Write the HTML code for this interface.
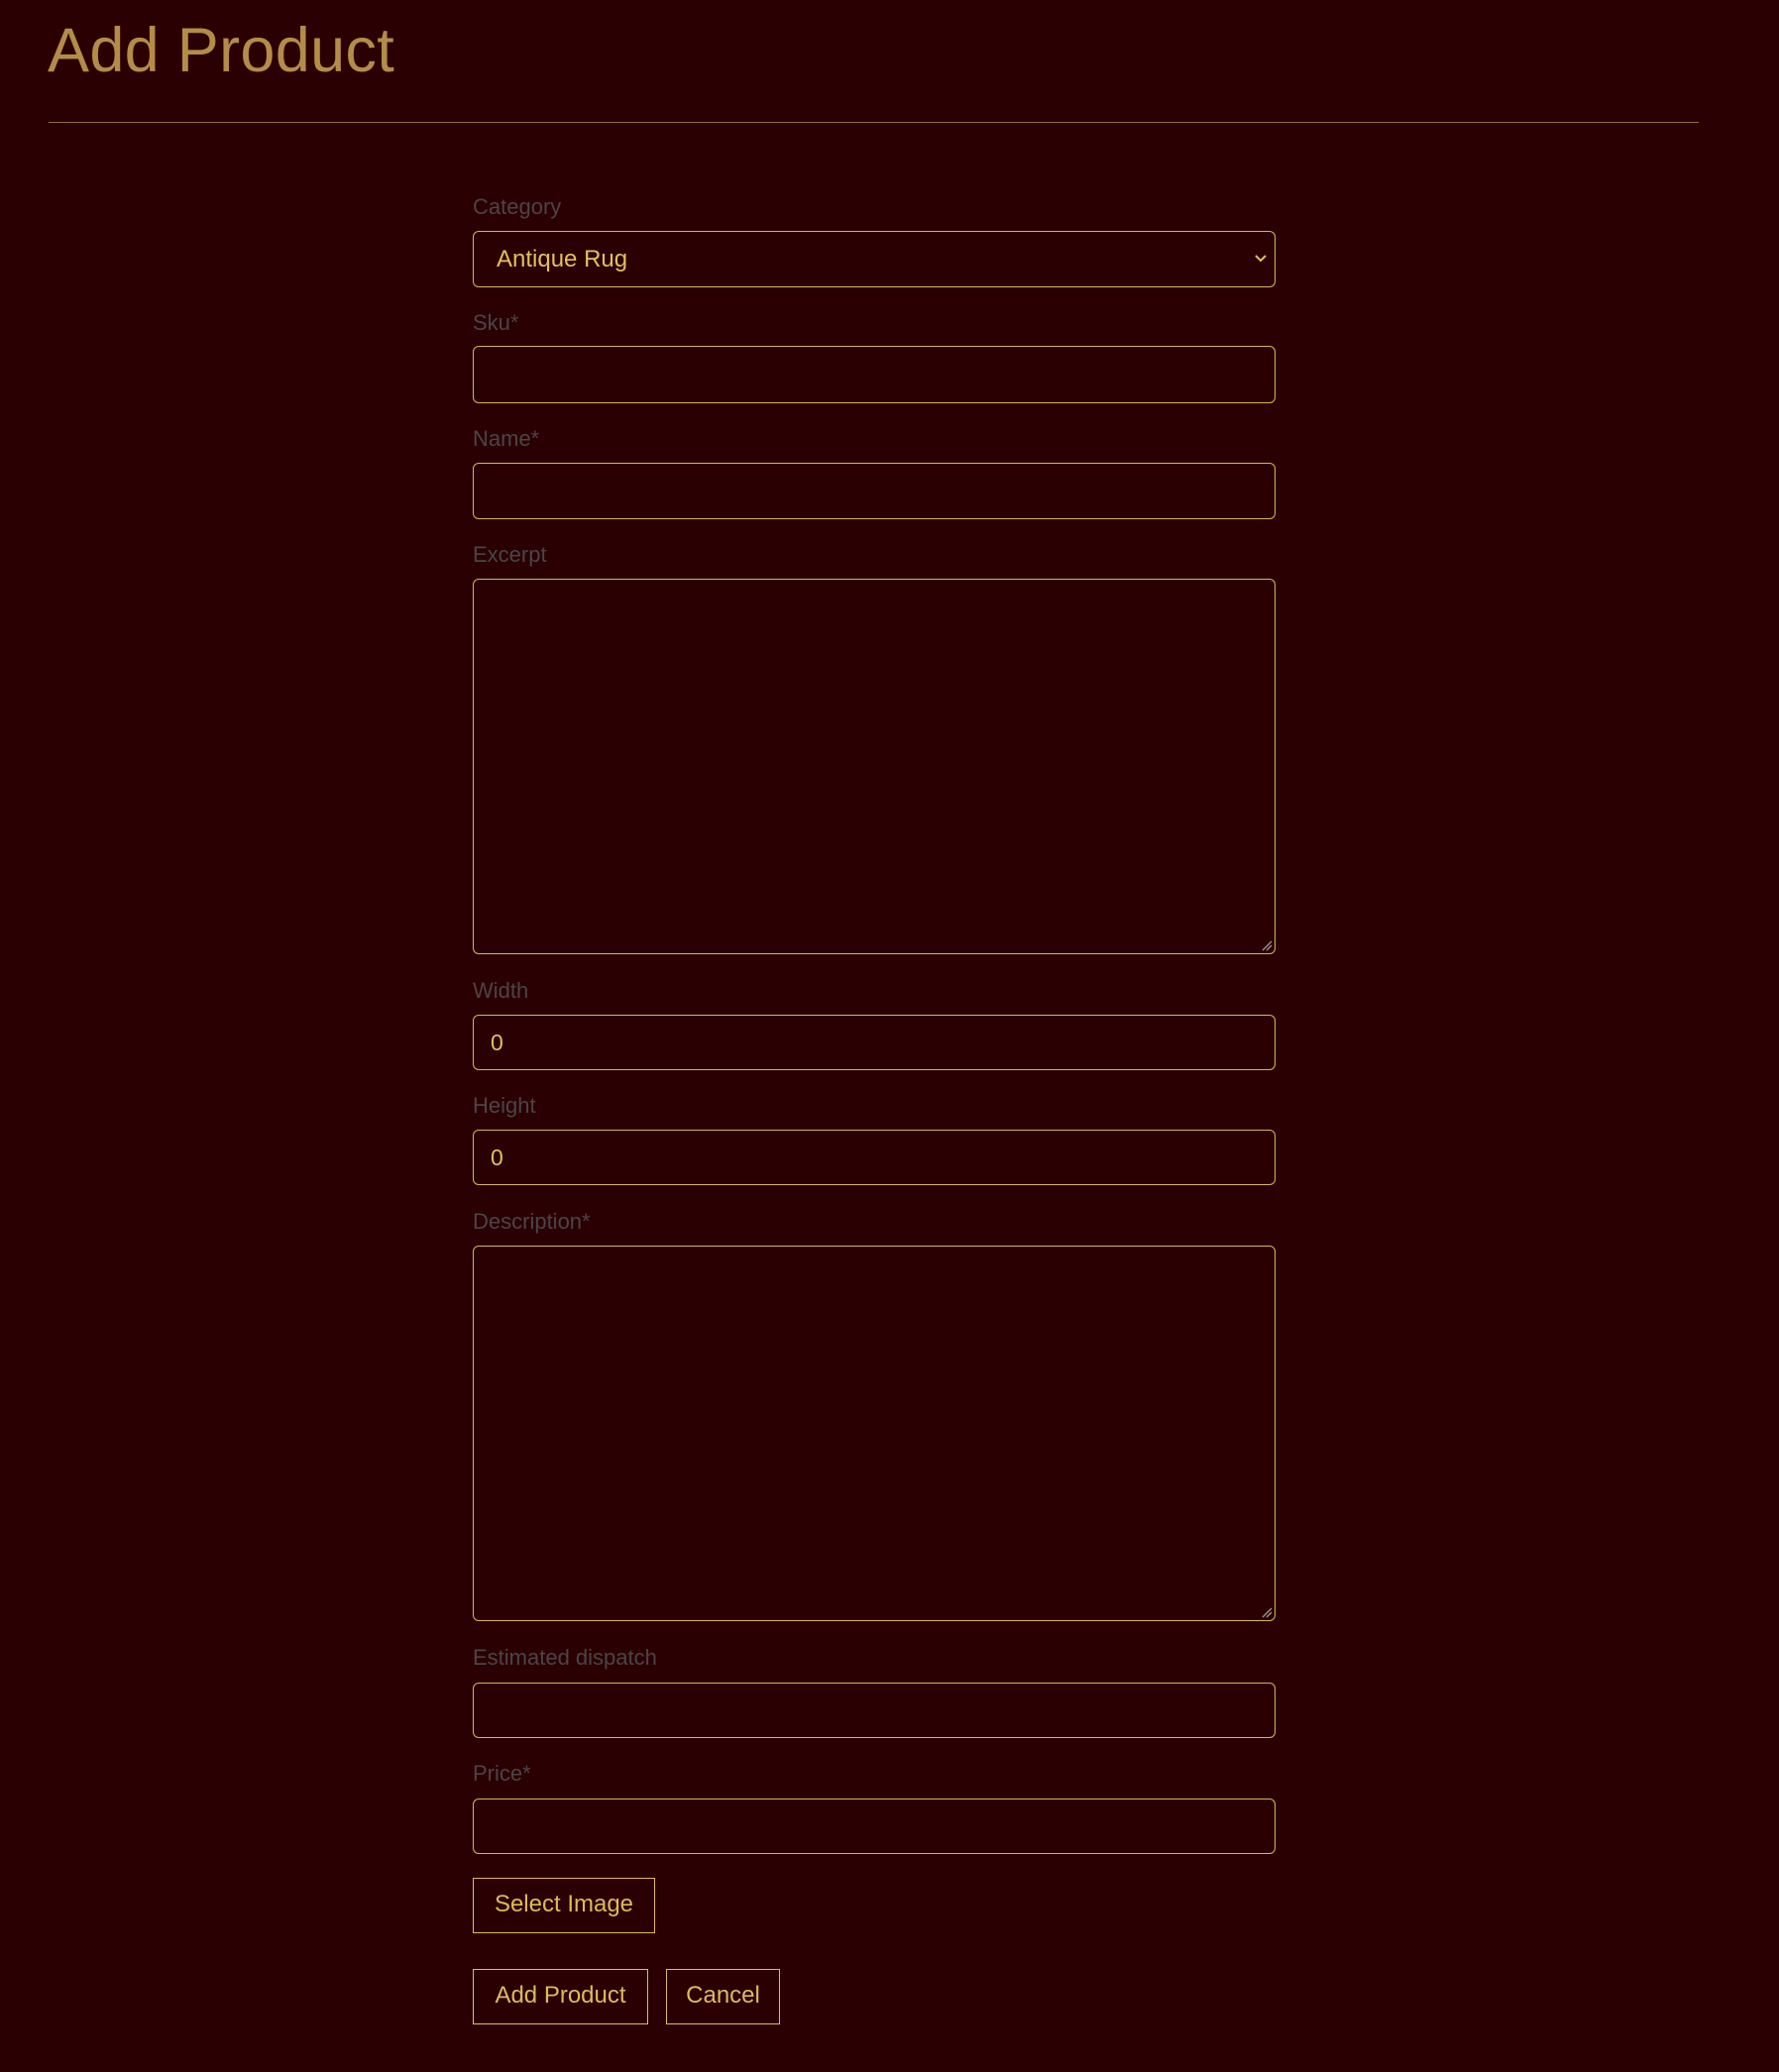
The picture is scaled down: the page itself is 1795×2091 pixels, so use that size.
<!DOCTYPE html>
<html><head><meta charset="utf-8"><style>
html,body{margin:0;padding:0;background:#2a0002;width:1795px;height:2091px;overflow:hidden;font-family:"Liberation Sans",sans-serif}
.a{position:absolute}
h1{position:absolute;left:48px;top:15px;margin:0;font-weight:400;font-size:63px;color:#b48c48;letter-spacing:0.3px}
.hr{position:absolute;left:49px;top:123px;width:1665px;height:1px;background:#8e6e3a}
.lbl{position:absolute;left:477px;font-size:22px;color:#4b4448}
.box{position:absolute;left:477px;width:810px;border:1.5px solid #d9b556;border-radius:6px;box-sizing:border-box}
.val{position:absolute;font-size:23px;color:#e6bf5e}
.btn{position:absolute;border:1.5px solid #e3ba58;box-sizing:border-box;color:#e0b95c;font-size:24px;text-align:center;line-height:52px}
.rz{position:absolute;right:2px;bottom:2px}
</style></head><body>
<h1>Add Product</h1>
<div class="hr"></div>

<div class="lbl" style="top:196px">Category</div>
<div class="box" style="top:233px;height:57px"><span class="val" style="left:23px;top:14px;font-size:24px">Antique Rug</span>
<svg class="a" style="right:6px;top:20px" width="16" height="14" viewBox="0 0 16 14"><path d="M3 4 L8 9 L13 4" stroke="#e6bf5e" stroke-width="2" fill="none"/></svg></div>

<div class="lbl" style="top:313px">Sku*</div>
<div class="box" style="top:349px;height:58px"></div>

<div class="lbl" style="top:430px">Name*</div>
<div class="box" style="top:467px;height:57px"></div>

<div class="lbl" style="top:547px">Excerpt</div>
<div class="box" style="top:584px;height:379px"><svg class="rz" width="12" height="12" viewBox="0 0 12 12"><path d="M2 11 L11 2 M6 11 L11 6" stroke="#9a9a9a" stroke-width="1.3"/></svg></div>

<div class="lbl" style="top:987px">Width</div>
<div class="box" style="top:1024px;height:56px"><span class="val" style="left:17px;top:14px">0</span></div>

<div class="lbl" style="top:1103px">Height</div>
<div class="box" style="top:1140px;height:56px"><span class="val" style="left:17px;top:14px">0</span></div>

<div class="lbl" style="top:1220px">Description*</div>
<div class="box" style="top:1257px;height:379px"><svg class="rz" width="12" height="12" viewBox="0 0 12 12"><path d="M2 11 L11 2 M6 11 L11 6" stroke="#9a9a9a" stroke-width="1.3"/></svg></div>

<div class="lbl" style="top:1660px">Estimated dispatch</div>
<div class="box" style="top:1698px;height:56px"></div>

<div class="lbl" style="top:1777px">Price*</div>
<div class="box" style="top:1815px;height:56px"></div>

<div class="btn" style="left:477px;top:1895px;width:184px;height:56px">Select Image</div>
<div class="btn" style="left:477px;top:1987px;width:177px;height:56px">Add Product</div>
<div class="btn" style="left:672px;top:1987px;width:115px;height:56px">Cancel</div>
</body></html>
